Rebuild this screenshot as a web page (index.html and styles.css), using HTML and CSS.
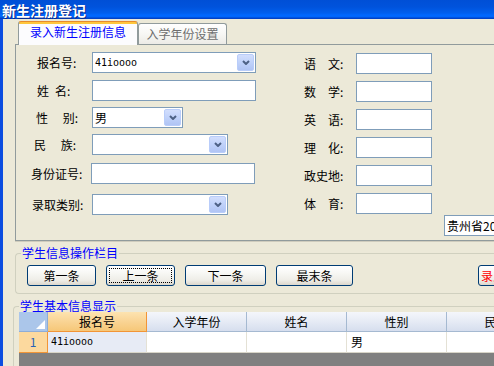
FILE: index.html
```html
<!DOCTYPE html>
<html lang="zh-CN">
<head>
<meta charset="utf-8">
<title>新生注册登记</title>
<link rel="stylesheet" href="styles.css">
</head>
<body>
<div class="window">
  <header class="titlebar"><h1 class="title">新生注册登记</h1></header>
  <div class="frame">
    <div class="tabs">
      <div class="tab tab-active">录入新生注册信息</div>
      <div class="tab tab-idle">入学年份设置</div>
    </div>
    <section class="panel">
      <div class="form">
        <div class="col col-left">
          <div class="row">
            <span class="lbl lp21">报名号:</span>
            <div class="combo w164"><span class="val mono">41ioooo</span><span class="drop"><svg width="8" height="5" viewBox="0 0 8 5"><path d="M1 1 L4 4 L7 1" fill="none" stroke="#4d6185" stroke-width="2"/></svg></span></div>
          </div>
          <div class="row mt7">
            <span class="lbl lp21">姓&ensp;名:</span>
            <div class="textbox w164"></div>
          </div>
          <div class="row mt6">
            <span class="lbl lp20">性&emsp;&nbsp;别:</span>
            <div class="combo w91"><span class="val">男</span><span class="drop"><svg width="8" height="5" viewBox="0 0 8 5"><path d="M1 1 L4 4 L7 1" fill="none" stroke="#4d6185" stroke-width="2"/></svg></span></div>
          </div>
          <div class="row mt6">
            <span class="lbl lp18">民&emsp;&nbsp;族:</span>
            <div class="combo w136"><span class="val"></span><span class="drop"><svg width="8" height="5" viewBox="0 0 8 5"><path d="M1 1 L4 4 L7 1" fill="none" stroke="#4d6185" stroke-width="2"/></svg></span></div>
          </div>
          <div class="row mt8">
            <span class="lbl lbl-id lp15">身份证号:</span>
            <div class="textbox w164"></div>
          </div>
          <div class="row mt10">
            <span class="lbl lp16">录取类别:</span>
            <div class="combo w136"><span class="val"></span><span class="drop"><svg width="8" height="5" viewBox="0 0 8 5"><path d="M1 1 L4 4 L7 1" fill="none" stroke="#4d6185" stroke-width="2"/></svg></span></div>
          </div>
        </div>
        <div class="col col-right">
          <div class="row"><span class="lbl-r">语&ensp;&ensp;文:</span><div class="textbox w76"></div></div>
          <div class="row mt7"><span class="lbl-r">数&ensp;&ensp;学:</span><div class="textbox w76"></div></div>
          <div class="row mt7"><span class="lbl-r">英&ensp;&ensp;语:</span><div class="textbox w76"></div></div>
          <div class="row mt7"><span class="lbl-r">理&ensp;&ensp;化:</span><div class="textbox w76"></div></div>
          <div class="row mt7"><span class="lbl-r">政史地:</span><div class="textbox w76"></div></div>
          <div class="row mt7"><span class="lbl-r">体&ensp;&ensp;育:</span><div class="textbox w76"></div></div>
        </div>
      </div>
      <div class="addr-row"><div class="textbox addr"><span class="val">贵州省2010级新生</span></div></div>
    </section>

    <fieldset class="group ops">
      <legend class="legend">学生信息操作栏目</legend>
      <div class="btn-row">
        <button class="btn w69">第一条</button>
        <button class="btn w69 focus">上一条</button>
        <button class="btn w81">下一条</button>
        <button class="btn w77">最末条</button>
        <button class="btn btn-red">录入保存</button>
      </div>
    </fieldset>

    <fieldset class="group data">
      <legend class="legend">学生基本信息显示</legend>
      <div class="grid">
        <div class="corner"><svg width="9" height="9" viewBox="0 0 9 9"><path d="M9 0 L9 9 L0 9 Z" fill="#ffffff"/></svg></div>
        <div class="hc hc-sel">报名号</div>
        <div class="hc">入学年份</div>
        <div class="hc">姓名</div>
        <div class="hc">性别</div>
        <div class="hc">民族</div>
        <div class="rh">1</div>
        <div class="dc dc-sel mono">41ioooo</div>
        <div class="dc"></div>
        <div class="dc"></div>
        <div class="dc">男</div>
        <div class="dc"></div>
      </div>
    </fieldset>
  </div>
</div>
</body>
</html>
```

FILE: styles.css
```css
* { box-sizing: border-box; }
html, body { margin: 0; padding: 0; }
body {
  width: 494px;
  height: 366px;
  overflow: hidden;
  background: #ece9d8;
  font-family: "Noto Sans CJK SC", "Liberation Sans", sans-serif;
  font-size: 12px;
  color: #000;
}
.window {
  width: 494px;
  height: 366px;
  display: flex;
  flex-direction: column;
}
.titlebar {
  flex: none;
  height: 19px;
  padding-left: 2px;
  display: flex;
  align-items: center;
  background: linear-gradient(to bottom, #004fd6 0px, #0053dc 7px, #005fee 13px, #0068ff 15px, #0066fa 17px, #0042c8 18px, #0042c8 19px);
}
.title {
  margin: 0;
  font-size: 14px;
  font-weight: bold;
  line-height: 16px;
  color: #fff;
  text-shadow: 1px 1px 0 #0a2a8a;
}
.frame {
  flex: 1;
  border-left: 3px solid #0b4de0;
  overflow: hidden;
}

/* tabs */
.tabs {
  display: flex;
  align-items: flex-end;
  height: 25px;
  margin-left: 15px;
}
.tab {
  border: 1px solid #919b9c;
  border-bottom: none;
  border-radius: 3px 3px 0 0;
  text-align: center;
  white-space: nowrap;
}
.tab-active {
  position: relative;
  z-index: 1;
  width: 120px;
  height: 24px;
  margin-bottom: -1px;
  border-top-color: #e68b2c;
  background: linear-gradient(to bottom, #ffc73c 0, #ffc73c 2px, #fcfcfe 2px, #fcfcfe 100%);
  color: #0000ff;
  padding-top: 3px;
  line-height: 14px;
}
.tab-idle {
  width: 89px;
  height: 21px;
  background: linear-gradient(to bottom, #ffffff 0%, #f7f7f4 50%, #ecebe6 100%);
  color: #6e6e6e;
  line-height: 19px;
}

/* panel */
.panel {
  width: 520px;
  margin-left: 12px;
  border: 1px solid #919b9c;
  border-right: none;
  box-shadow: 0 1px 0 #cfccbd;
  padding: 7px 0 4px 0;
}
.form { display: flex; }
.col { display: flex; flex-direction: column; }
.col-left { width: 288px; }
.col-right { padding-top: 1px; }
.row {
  display: flex;
  align-items: center;
  height: 21px;
}
.mt6 { margin-top: 6px; }
.mt7 { margin-top: 7px; }
.mt8 { margin-top: 8px; }
.mt10 { margin-top: 10px; }
.lbl {
  flex: none;
  width: 76px;
  white-space: nowrap;
  line-height: 14px;
}
.lbl-id { width: 75px; }
.lp15 { padding-left: 15px; }
.lp16 { padding-left: 16px; }
.lp18 { padding-left: 18px; }
.lp20 { padding-left: 20px; }
.lp21 { padding-left: 21px; }
.lbl-r {
  flex: none;
  width: 52px;
  white-space: nowrap;
  line-height: 14px;
}

.textbox, .combo {
  height: 21px;
  border: 1px solid #7f9db9;
  background: #fff;
  display: flex;
  align-items: center;
  overflow: hidden;
  white-space: nowrap;
}
.combo { padding: 1px; }
.w76 { width: 76px; }
.w91 { width: 91px; }
.w136 { width: 136px; }
.w164 { width: 164px; }
.val {
  flex: 1;
  padding-left: 2px;
  line-height: 14px;
}
.combo .val { padding-left: 1px; }
.mono {
  font-family: "DejaVu Sans Mono", "Liberation Mono", monospace;
  font-size: 10px;
}
.drop {
  flex: none;
  width: 17px;
  height: 17px;
  border: 1px solid #b9cdfa;
  border-radius: 2px;
  background: linear-gradient(to bottom, #d2defd 0%, #c0d2fa 50%, #b0c4f4 100%);
  display: flex;
  align-items: center;
  justify-content: center;
}
.addr-row { padding-left: 428px; }
.addr { width: 80px; }

/* group boxes */
.group {
  width: 520px;
  margin: 0;
  border: 1px solid #d0d0bf;
  border-right: none;
  border-radius: 4px 0 0 4px;
  min-width: 0;
}
.legend {
  color: #0000ff;
  line-height: 14px;
  padding: 0 1px;
}
.ops {
  margin-top: 5px;
  margin-left: 12px;
  padding: 5px 0 7px 11px;
}
.ops .legend { margin-left: -6px; }
.btn-row {
  display: flex;
  gap: 10px;
}
.btn {
  flex: none;
  height: 21px;
  padding: 0;
  border: 1px solid #003c74;
  border-radius: 3px;
  background: linear-gradient(to bottom, #ffffff 0%, #f8f8f5 35%, #eeede7 75%, #dcd7cc 100%);
  font-family: "Noto Sans CJK SC", "Liberation Sans", sans-serif;
  font-size: 12px;
  line-height: 19px;
  color: #000;
  text-align: center;
}
.w69 { width: 69px; }
.w77 { width: 77px; }
.w81 { width: 81px; }
.focus {
  outline: 1px dotted #000;
  outline-offset: -4px;
}
.btn-red {
  width: 70px;
  margin-left: 115px;
  color: #ff0000;
  text-align: left;
  padding-left: 2px;
}

.data {
  margin-top: 5px;
  margin-left: 10px;
  padding: 0 0 0 5px;
}
.data .legend { margin-bottom: -1px; }
.grid {
  display: grid;
  grid-template-columns: 29px 99px 100px 100px 100px 100px;
  grid-template-rows: 20px 21px;
  height: 60px;
  background: #808080;
}
.corner {
  background: #abc6ea;
  border-right: 1px solid #8fadd6;
  border-bottom: 1px solid #8fadd6;
  display: flex;
  justify-content: flex-end;
  align-items: flex-end;
  padding: 0 2px 2px 0;
}
.hc {
  background: linear-gradient(to bottom, #f4f6fb 0%, #e6ebf5 50%, #d6deee 100%);
  border-right: 1px solid #a5b9d1;
  border-bottom: 1px solid #a5b9d1;
  text-align: center;
  line-height: 19px;
  white-space: nowrap;
  overflow: hidden;
}
.hc-sel {
  background: linear-gradient(to bottom, #fde3b0 0%, #f9d494 50%, #f6c778 100%);
  border-right-color: #f29536;
  border-bottom-color: #f29536;
}
.rh {
  background: #fcd99e;
  border-right: 1px solid #f29536;
  border-bottom: 1px solid #f29536;
  color: #2a62b6;
  text-align: center;
  line-height: 20px;
}
.dc {
  background: #fff;
  border-right: 1px solid #e4e1d5;
  border-bottom: 1px solid #d8d5c8;
  padding-left: 4px;
  line-height: 20px;
  white-space: nowrap;
}
.dc-sel {
  background: #e7ebf5;
  padding-left: 3px;
}
```
